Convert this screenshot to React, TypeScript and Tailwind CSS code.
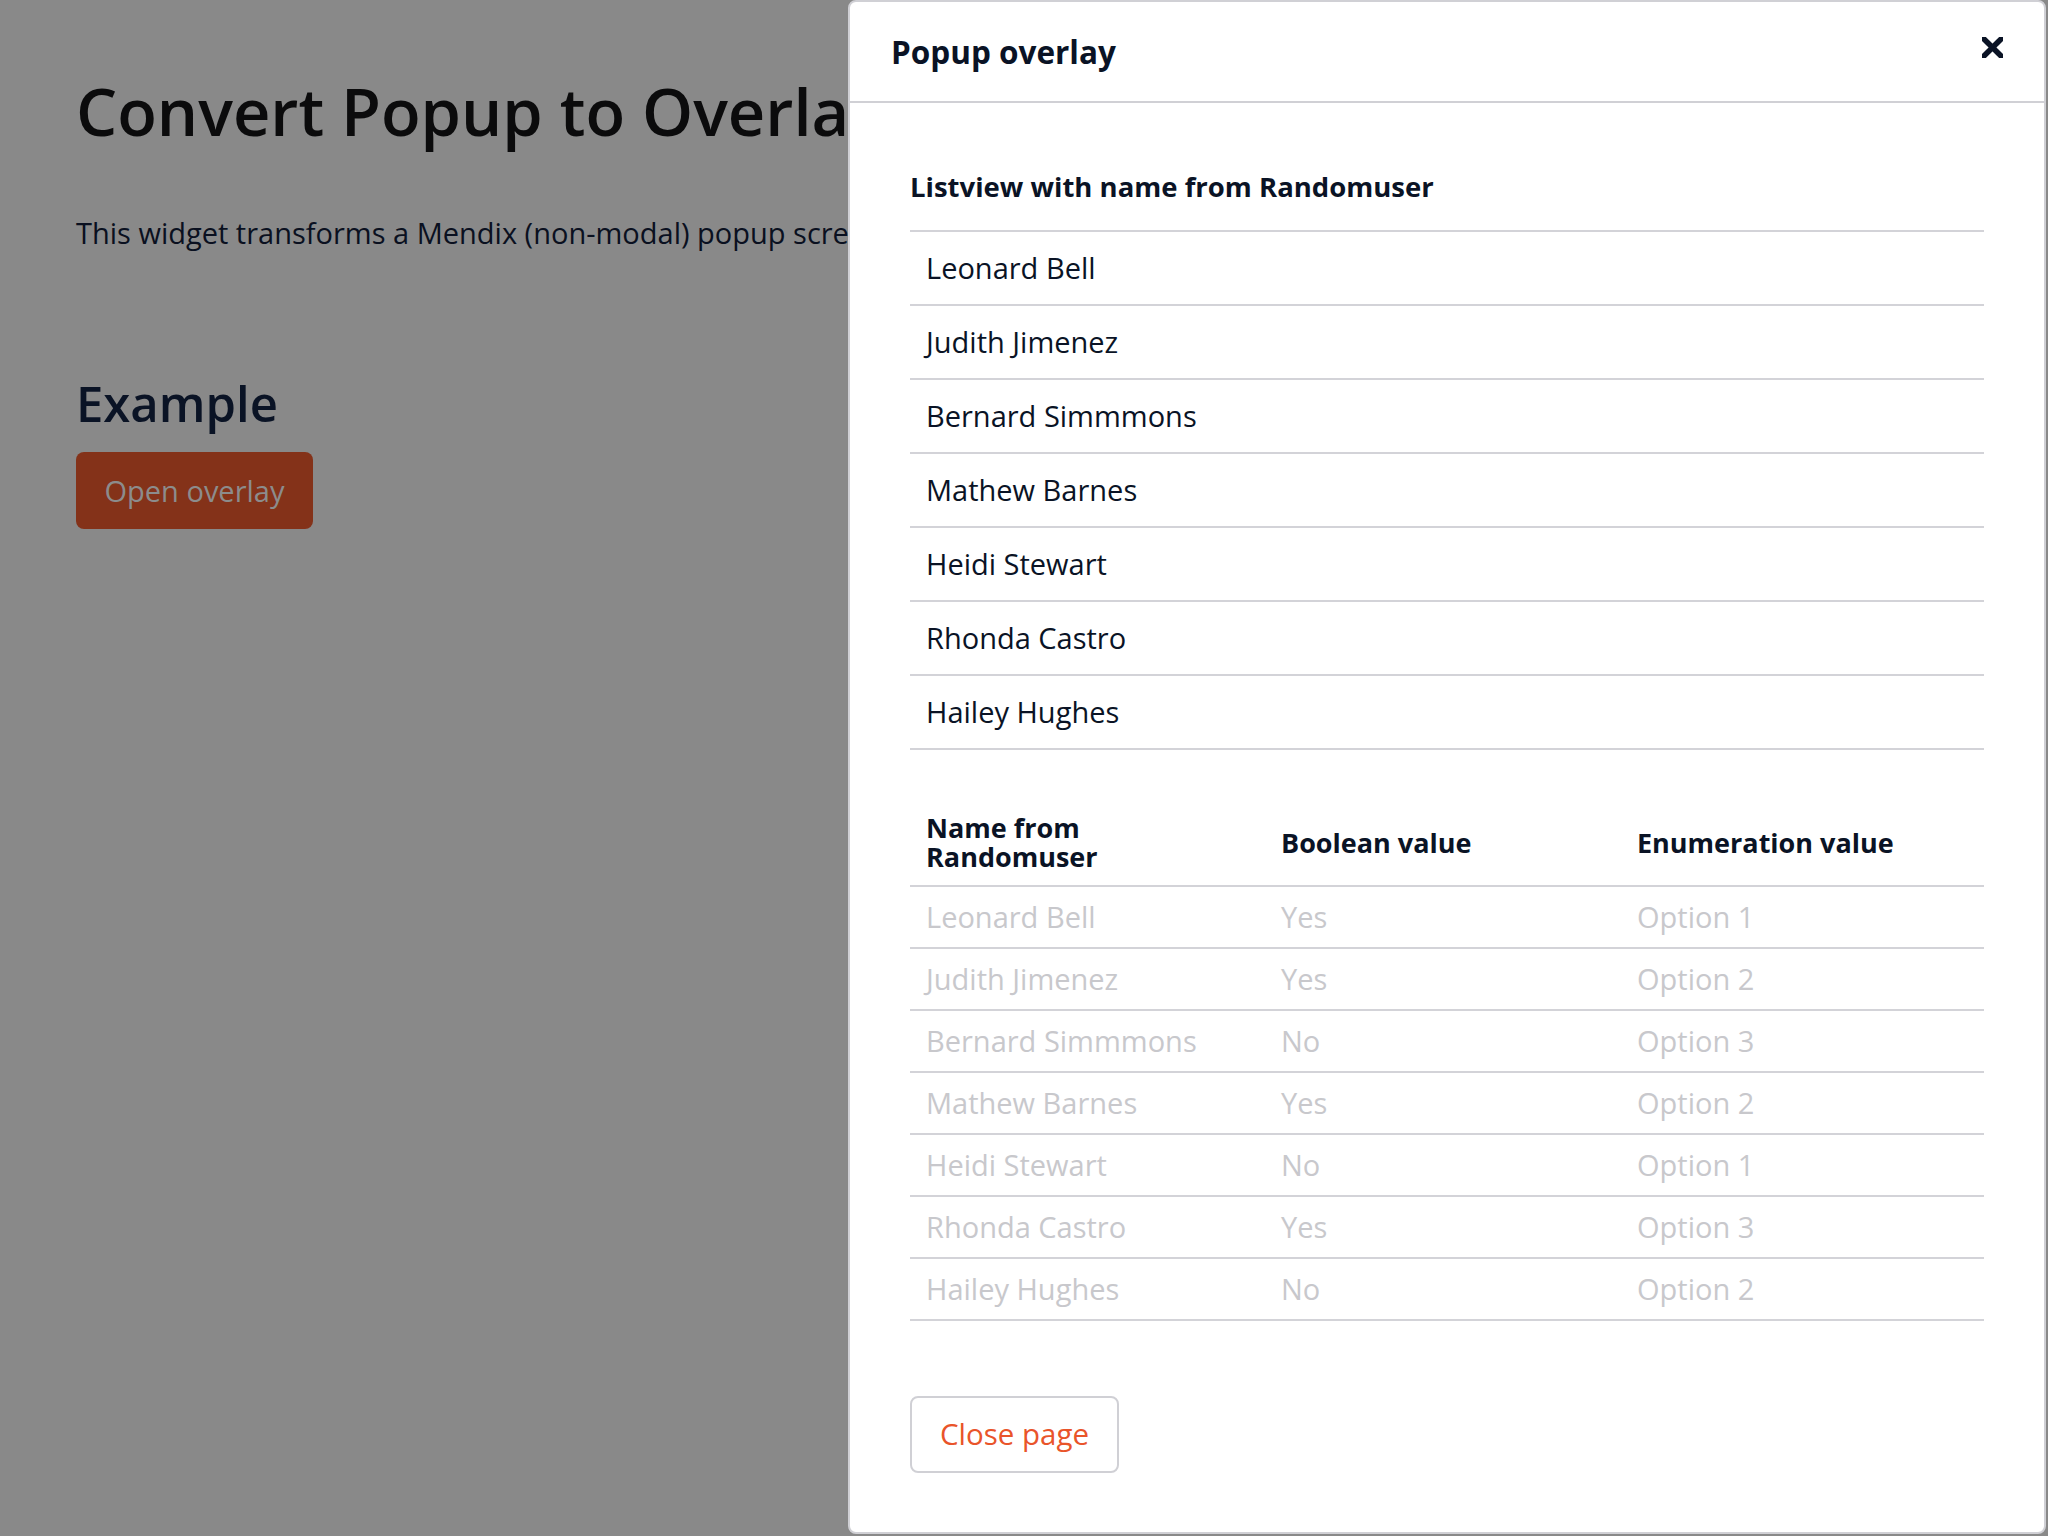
const names = [
  'Leonard Bell',
  'Judith Jimenez',
  'Bernard Simmmons',
  'Mathew Barnes',
  'Heidi Stewart',
  'Rhonda Castro',
  'Hailey Hughes',
];

const rows = [
  ['Leonard Bell', 'Yes', 'Option 1'],
  ['Judith Jimenez', 'Yes', 'Option 2'],
  ['Bernard Simmmons', 'No', 'Option 3'],
  ['Mathew Barnes', 'Yes', 'Option 2'],
  ['Heidi Stewart', 'No', 'Option 1'],
  ['Rhonda Castro', 'Yes', 'Option 3'],
  ['Hailey Hughes', 'No', 'Option 2'],
];

const CloseIcon = () => (
  <svg width="21" height="21" viewBox="0 0 21 21" className="-mt-[8px] overflow-hidden">
    <line x1="-1" y1="-1" x2="22" y2="22" stroke="#0a1325" strokeWidth="5.5" />
    <line x1="22" y1="-1" x2="-1" y2="22" stroke="#0a1325" strokeWidth="5.5" />
  </svg>
);

const App = () => {
  return (
    <div className="relative h-[1536px] w-[2048px] overflow-hidden bg-[#898989] font-['Open_Sans',sans-serif]">
      <main className="pl-[76px] pt-[73px]">
        <h1 className="whitespace-nowrap text-[65px] font-semibold leading-[77px] text-[#0b0b0c]">
          Convert Popup to Overlay
        </h1>
        <p className="mt-[62px] whitespace-nowrap text-[29px] leading-[42px] text-[#0a1020]">
          This widget transforms a Mendix (non-modal) popup screen into an overlay.
        </p>
        <h2 className="mt-[119px] text-[49px] font-semibold leading-[60px] text-[#0a1325]">
          Example
        </h2>
        <button className="mt-[19px] h-[77px] w-[237px] rounded-[8px] bg-[#843219] text-[29px] text-[#8c8c8c]">
          Open overlay
        </button>
      </main>

      <aside className="absolute bottom-[2px] left-[848px] right-[2px] top-0 flex flex-col rounded-[8px] border-2 border-[#d0d0d5] bg-white">
        <header className="flex h-[101px] shrink-0 items-center justify-between border-b-2 border-[#d0d0d5] px-[41px]">
          <h3 className="text-[31.5px] font-bold text-[#0a1325]">Popup overlay</h3>
          <CloseIcon />
        </header>

        <div className="px-[60px] pt-[67px]">
          <h4 className="mb-[26px] text-[27.5px] font-bold leading-[34px] text-[#0a1325]">
            Listview with name from Randomuser
          </h4>
          <ul className="border-t-2 border-[#d3d3d8]">
            {names.map((name) => (
              <li
                key={name}
                className="flex h-[74px] items-center border-b-2 border-[#d3d3d8] px-4 text-[29px] text-[#0a1325]"
              >
                {name}
              </li>
            ))}
          </ul>

          <div className="mt-[47px]">
            <div className="grid grid-cols-[355px_356px_1fr] border-b-2 border-[#d3d3d8] text-[27px] font-bold leading-[29px] text-[#0a1325]">
              <div className="flex items-center px-4 pb-[14px] pt-4">Name from Randomuser</div>
              <div className="flex items-center px-4 pb-[14px] pt-4">Boolean value</div>
              <div className="flex items-center px-4 pb-[14px] pt-4">Enumeration value</div>
            </div>
            {rows.map((row) => (
              <div
                key={row[0]}
                className="grid h-[62px] grid-cols-[355px_356px_1fr] items-center border-b-2 border-[#d3d3d8] text-[29px] text-[#c8c8cc]"
              >
                {row.map((cell, i) => (
                  <div key={i} className="px-4">
                    {cell}
                  </div>
                ))}
              </div>
            ))}
          </div>

          <button className="mt-[75px] h-[77px] w-[209px] rounded-[8px] border-2 border-[#d0d0d5] bg-white text-[29.5px] text-[#e9542a]">
            Close page
          </button>
        </div>
      </aside>
    </div>
  );
};

export default App;
